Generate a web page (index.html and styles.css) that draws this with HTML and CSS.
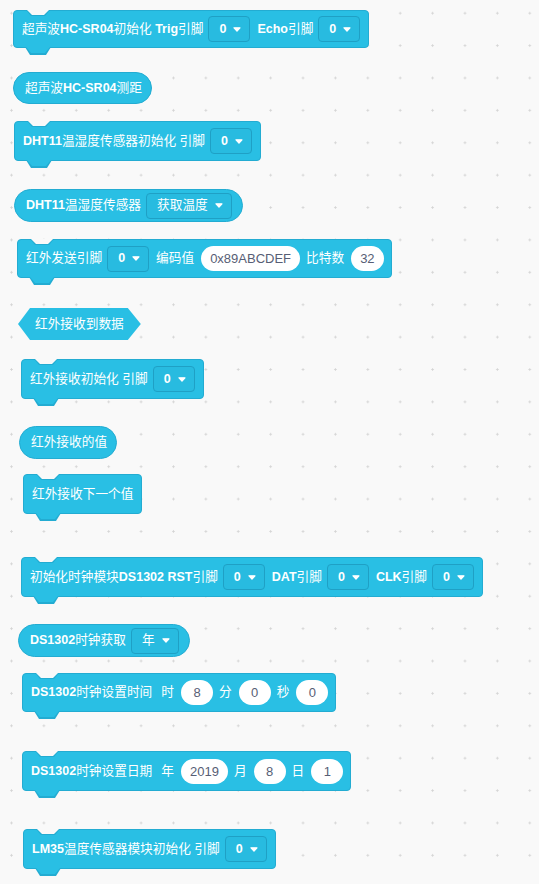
FILE: index.html
```html
<!DOCTYPE html>
<html lang="zh">
<head>
<meta charset="utf-8">
<title>Blocks</title>
<link rel="stylesheet" href="styles.css">
</head>
<body>
<div class="ws">
  <div class="blk stack b1">
    <span class="t">超声波<b>HC-SR04</b>初始化 <b>Trig</b>引脚</span>
    <span class="dd"><b>0</b><svg class="arr" viewBox="0 0 8 5"><path d="M1 .8H7L4 4.2Z"/></svg></span>
    <span class="t"><b>Echo</b>引脚</span>
    <span class="dd"><b>0</b><svg class="arr" viewBox="0 0 8 5"><path d="M1 .8H7L4 4.2Z"/></svg></span>
  </div>

  <div class="blk rep b2"><span class="t">超声波<b>HC-SR04</b>测距</span></div>

  <div class="blk stack b3">
    <span class="t"><b>DHT11</b>温湿度传感器初始化 引脚</span>
    <span class="dd"><b>0</b><svg class="arr" viewBox="0 0 8 5"><path d="M1 .8H7L4 4.2Z"/></svg></span>
  </div>

  <div class="blk rep b4">
    <span class="t"><b>DHT11</b>温湿度传感器</span>
    <span class="dd">获取温度<svg class="arr" viewBox="0 0 8 5"><path d="M1 .8H7L4 4.2Z"/></svg></span>
  </div>

  <div class="blk stack b5">
    <span class="t">红外发送引脚</span>
    <span class="dd"><b>0</b><svg class="arr" viewBox="0 0 8 5"><path d="M1 .8H7L4 4.2Z"/></svg></span>
    <span class="t">编码值</span>
    <span class="num">0x89ABCDEF</span>
    <span class="t">比特数</span>
    <span class="num">32</span>
  </div>

  <div class="blk hex b6"><span class="t">红外接收到数据</span></div>

  <div class="blk stack b7">
    <span class="t">红外接收初始化 引脚</span>
    <span class="dd"><b>0</b><svg class="arr" viewBox="0 0 8 5"><path d="M1 .8H7L4 4.2Z"/></svg></span>
  </div>

  <div class="blk rep b8"><span class="t">红外接收的值</span></div>

  <div class="blk stack b9"><span class="t">红外接收下一个值</span></div>

  <div class="blk stack b10">
    <span class="t">初始化时钟模块<b>DS1302 RST</b>引脚</span>
    <span class="dd"><b>0</b><svg class="arr" viewBox="0 0 8 5"><path d="M1 .8H7L4 4.2Z"/></svg></span>
    <span class="t"><b>DAT</b>引脚</span>
    <span class="dd"><b>0</b><svg class="arr" viewBox="0 0 8 5"><path d="M1 .8H7L4 4.2Z"/></svg></span>
    <span class="t"><b>CLK</b>引脚</span>
    <span class="dd"><b>0</b><svg class="arr" viewBox="0 0 8 5"><path d="M1 .8H7L4 4.2Z"/></svg></span>
  </div>

  <div class="blk rep b11">
    <span class="t"><b>DS1302</b>时钟获取</span>
    <span class="dd">年<svg class="arr" viewBox="0 0 8 5"><path d="M1 .8H7L4 4.2Z"/></svg></span>
  </div>

  <div class="blk stack b12">
    <span class="t"><b>DS1302</b>时钟设置时间</span>
    <span class="t sp">时</span>
    <span class="num">8</span>
    <span class="t">分</span>
    <span class="num">0</span>
    <span class="t">秒</span>
    <span class="num">0</span>
  </div>

  <div class="blk stack b13">
    <span class="t"><b>DS1302</b>时钟设置日期</span>
    <span class="t sp">年</span>
    <span class="num">2019</span>
    <span class="t">月</span>
    <span class="num">8</span>
    <span class="t">日</span>
    <span class="num">1</span>
  </div>

  <div class="blk stack b14">
    <span class="t"><b>LM35</b>温度传感器模块初始化 引脚</span>
    <span class="dd"><b>0</b><svg class="arr" viewBox="0 0 8 5"><path d="M1 .8H7L4 4.2Z"/></svg></span>
  </div>
</div>
</body>
</html>
```

FILE: styles.css
```css
html, body {
  margin: 0;
  padding: 0;
}

body {
  min-height: 884px;
  background-color: #f9f9f9;
  background-image: radial-gradient(circle, #d4d4d4 0.9px, rgba(212,212,212,0) 1.3px);
  background-size: 32.4px 32.4px;
  background-position: -4.7px -3px;
  font-family: "Liberation Sans", "Noto Sans CJK SC", sans-serif;
  font-size: 12.7px;
}

.ws {
  display: flex;
  flex-direction: column;
  align-items: flex-start;
}

.blk {
  position: relative;
  display: inline-flex;
  align-items: center;
  gap: 6px;
  box-sizing: border-box;
  background: #29bfe4;
  border: 1px solid #23acd2;
  color: #fff;
  white-space: nowrap;
  line-height: 1;
}

.blk b {
  font-weight: bold;
  font-size: 12.5px;
}

.stack {
  height: 40px;
  border-radius: 4px;
  padding: 0 7px 0 8px;
}

.stack::before {
  content: "";
  position: absolute;
  left: 12px;
  top: -1px;
  width: 24px;
  height: 6px;
  background: #23acd2;
  clip-path: polygon(0 0, 100% 0, calc(100% - 5px) 100%, 5px 100%);
}

.stack::after {
  content: "";
  position: absolute;
  left: 11px;
  top: 100%;
  width: 26px;
  height: 8px;
  background: #23acd2;
  clip-path: polygon(0 0, 100% 0, calc(100% - 5px) 100%, 5px 100%);
}

.stack .t:first-child::before {
  content: "";
  position: absolute;
  left: 13px;
  top: -1px;
  width: 22px;
  height: 5px;
  background: #f9f9f9;
  clip-path: polygon(0 0, 100% 0, calc(100% - 5px) 100%, 5px 100%);
  z-index: 1;
}

.stack .t:first-child::after {
  content: "";
  position: absolute;
  left: 12px;
  top: 100%;
  width: 24px;
  height: 6px;
  background: #29bfe4;
  clip-path: polygon(0 0, 100% 0, calc(100% - 5px) 100%, 5px 100%);
  z-index: 1;
}

.rep {
  height: 33px;
  border-radius: 17px;
  padding: 0 9px 0 11px;
}

.hex {
  height: 32px;
  border: none;
  padding: 0 17px 0 17px;
  clip-path: polygon(0 50%, 12px 0, calc(100% - 13px) 0, 100% 50%, calc(100% - 13px) 100%, 12px 100%);
}

.dd {
  display: inline-flex;
  align-items: center;
  gap: 7px;
  height: 26px;
  box-sizing: border-box;
  padding: 0 8px 0 10px;
  margin: 0 1px 0 -1px;
  border: 1px solid #1fa0c5;
  border-radius: 4px;
  background: #28bbe0;
}

.arr {
  width: 8px;
  height: 5px;
  display: block;
}

.arr path {
  fill: #fff;
  stroke: #fff;
  stroke-width: 1.2;
  stroke-linejoin: round;
}

.num {
  display: inline-flex;
  align-items: center;
  justify-content: center;
  height: 25px;
  min-width: 32px;
  padding: 0 9px;
  margin-left: 1px;
  box-sizing: border-box;
  border-radius: 13px;
  background: #fff;
  color: #575e75;
  font-size: 13px;
}

.sp {
  margin-left: 3px;
}

.b1  { margin: 10px 0 0 13px; height: 38px; }
.b2  { margin: 24px 0 0 13px; height: 32px; }
.b3  { margin: 17px 0 0 14px; }
.b4  { margin: 28px 0 0 14px; }
.b5  { margin: 17px 0 0 17px; height: 39px; }
.b6  { margin: 30px 0 0 18px; }
.b7  { margin: 19px 0 0 21px; }
.b8  { margin: 27px 0 0 19px; }
.b9  { margin: 15px 0 0 23px; }
.b10 { margin: 43px 0 0 21px; }
.b11 { margin: 27px 0 0 18px; }
.b12 { margin: 16px 0 0 22px; height: 39px; }
.b13 { margin: 39px 0 0 22px; }
.b14 { margin: 38px 0 0 23px; }
```
